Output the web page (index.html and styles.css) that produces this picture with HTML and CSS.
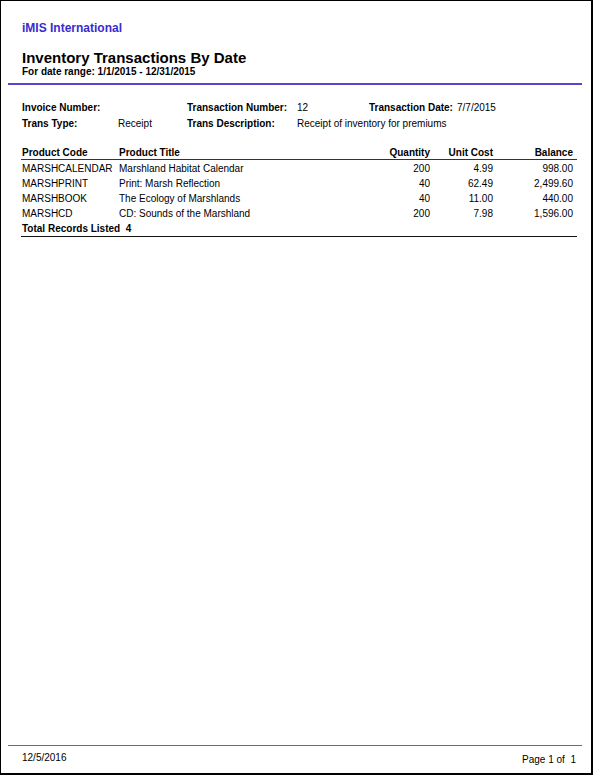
FILE: index.html
```html
<!DOCTYPE html>
<html>
<head>
<meta charset="utf-8">
<link rel="stylesheet" href="styles.css">
</head>
<body>
<div class="page">
  <header class="report-head">
    <div class="company">iMIS International</div>
    <h1 class="title">Inventory Transactions By Date</h1>
    <div class="range">For date range: 1/1/2015 - 12/31/2015</div>
  </header>
  <div class="rule"></div>
  <section class="details">
    <div class="drow">
      <span class="lbl c1">Invoice Number:</span><span class="val c2"></span>
      <span class="lbl c3">Transaction Number:</span><span class="val c4">12</span>
      <span class="lbl c5">Transaction Date:</span><span class="val c6">7/7/2015</span>
    </div>
    <div class="drow">
      <span class="lbl c1">Trans Type:</span><span class="val c2">Receipt</span>
      <span class="lbl c3">Trans Description:</span><span class="val">Receipt of inventory for premiums</span>
    </div>
  </section>
  <table class="items">
    <colgroup>
      <col class="w-code"><col class="w-title"><col class="w-qty"><col class="w-cost"><col class="w-bal">
    </colgroup>
    <thead>
      <tr><th>Product Code</th><th>Product Title</th><th class="num">Quantity</th><th class="num">Unit Cost</th><th class="num bal">Balance</th></tr>
    </thead>
    <tbody>
      <tr><td>MARSHCALENDAR</td><td>Marshland Habitat Calendar</td><td class="num">200</td><td class="num">4.99</td><td class="num bal">998.00</td></tr>
      <tr><td>MARSHPRINT</td><td>Print: Marsh Reflection</td><td class="num">40</td><td class="num">62.49</td><td class="num bal">2,499.60</td></tr>
      <tr><td>MARSHBOOK</td><td>The Ecology of Marshlands</td><td class="num">40</td><td class="num">11.00</td><td class="num bal">440.00</td></tr>
      <tr><td>MARSHCD</td><td>CD: Sounds of the Marshland</td><td class="num">200</td><td class="num">7.98</td><td class="num bal">1,596.00</td></tr>
    </tbody>
    <tfoot>
      <tr><td colspan="5" class="total">Total Records Listed&nbsp; 4</td></tr>
    </tfoot>
  </table>
  <footer class="report-foot">
    <div class="rule thin"></div>
    <div class="foot-row">
      <span class="date">12/5/2016</span>
      <span class="pg">Page 1 of &nbsp;1</span>
    </div>
  </footer>
</div>
</body>
</html>
```
FILE: styles.css
```css
* { box-sizing: border-box; }
html, body { margin: 0; padding: 0; background: #fff; }
body { font-family: "Liberation Sans", Arial, sans-serif; color: #000; }
.page {
  width: 593px;
  height: 775px;
  border: 1px solid #000;
  border-width: 1px 2px 2px 1px;
  display: flex;
  flex-direction: column;
  padding: 0 9px 0 7px;
}
.report-head { padding: 20px 0 0 14px; }
.company { font-size: 12px; font-weight: bold; color: #3a2ad0; line-height: 14px; }
.title { font-size: 15px; font-weight: bold; margin: 14px 0 0; line-height: 17px; }
.range { font-size: 10px; font-weight: bold; line-height: 11px; }
.rule { height: 2px; background: #5a46c8; margin-top: 6px; }
.rule.thin { height: 1px; background: #6a58d8; margin-top: 0; }
.details { padding: 15px 0 0 14px; font-size: 10px; }
.drow { display: flex; height: 16px; line-height: 16px; }
.lbl { font-weight: bold; }
.c1 { width: 96px; }
.c2 { width: 69px; }
.c3 { width: 110px; }
.c4 { width: 72px; }
.c5 { width: 88px; }
.items {
  margin: 13px 0 0 13px;
  width: 556px;
  table-layout: fixed;
  border-collapse: collapse;
  font-size: 10px;
}
.w-code { width: 97px; }
.w-title { width: 243px; }
.w-qty { width: 70px; }
.w-cost { width: 63px; }
.w-bal { width: 83px; }
.items th, .items td { padding: 0 1px; text-align: left; height: 15px; line-height: 15px; white-space: nowrap; overflow: visible; }
.items th { font-weight: bold; border-bottom: 1px solid #333; height: 14px; line-height: 13px; padding-top: 1px; }
.items .num { text-align: right; }
.items .bal { padding-right: 4px; }
.items tbody tr:first-child td { padding-top: 1px; }
.items .total { font-weight: bold; border-bottom: 1px solid #111; }
.report-foot { margin-top: auto; margin-bottom: 8px; }
.foot-row { display: flex; justify-content: space-between; font-size: 10px; padding: 6px 6px 0 14px; }
.pg { padding-top: 2px; }
```
